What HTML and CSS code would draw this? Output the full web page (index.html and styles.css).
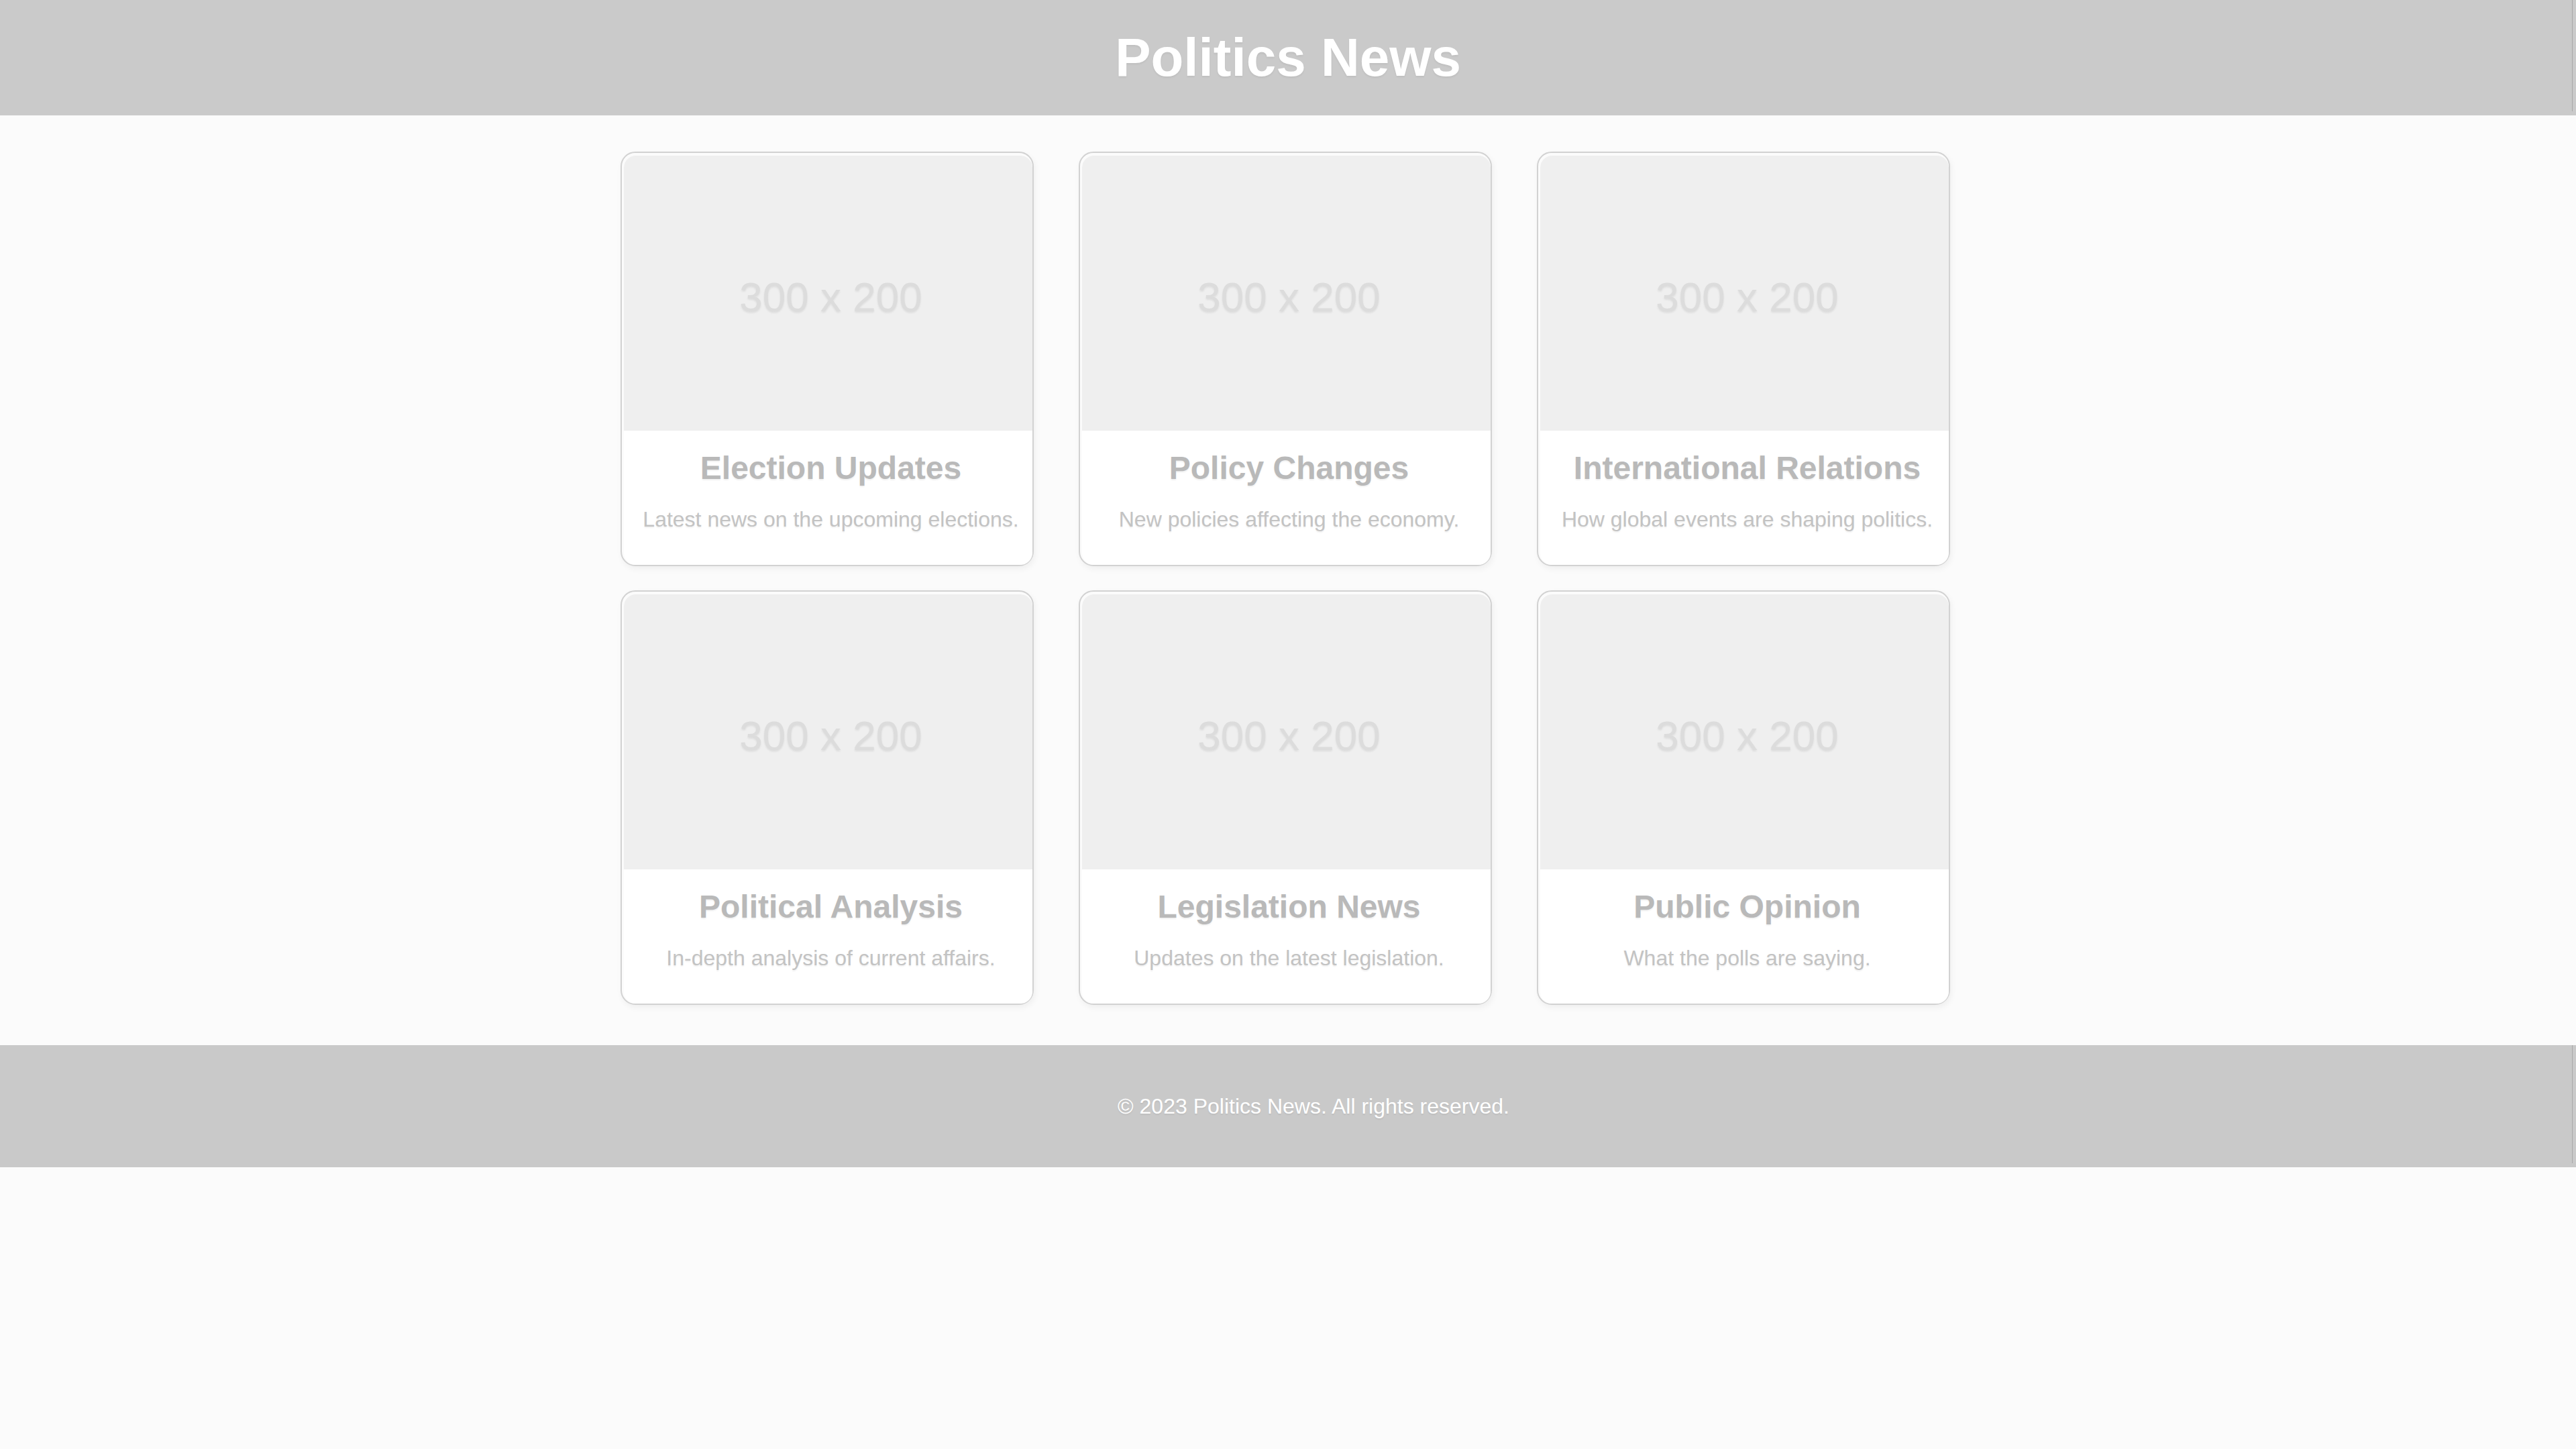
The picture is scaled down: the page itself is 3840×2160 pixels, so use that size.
FILE: index.html
```html
<!DOCTYPE html>
<html lang="en">
<head>
<meta charset="utf-8">
<title>Politics News</title>
<link rel="stylesheet" href="styles.css">
</head>
<body>
<header class="site-header">
  <h1 class="site-title">Politics News</h1>
</header>
<main class="content">
  <section class="grid">
    <article class="card">
      <div class="card-inner">
        <div class="thumb"><span>300 x 200</span></div>
        <div class="card-body">
          <h2 class="card-title">Election Updates</h2>
          <p class="card-text">Latest news on the upcoming elections.</p>
        </div>
      </div>
    </article>
    <article class="card">
      <div class="card-inner">
        <div class="thumb"><span>300 x 200</span></div>
        <div class="card-body">
          <h2 class="card-title">Policy Changes</h2>
          <p class="card-text">New policies affecting the economy.</p>
        </div>
      </div>
    </article>
    <article class="card">
      <div class="card-inner">
        <div class="thumb"><span>300 x 200</span></div>
        <div class="card-body">
          <h2 class="card-title">International Relations</h2>
          <p class="card-text">How global events are shaping politics.</p>
        </div>
      </div>
    </article>
    <article class="card">
      <div class="card-inner">
        <div class="thumb"><span>300 x 200</span></div>
        <div class="card-body">
          <h2 class="card-title">Political Analysis</h2>
          <p class="card-text">In-depth analysis of current affairs.</p>
        </div>
      </div>
    </article>
    <article class="card">
      <div class="card-inner">
        <div class="thumb"><span>300 x 200</span></div>
        <div class="card-body">
          <h2 class="card-title">Legislation News</h2>
          <p class="card-text">Updates on the latest legislation.</p>
        </div>
      </div>
    </article>
    <article class="card">
      <div class="card-inner">
        <div class="thumb"><span>300 x 200</span></div>
        <div class="card-body">
          <h2 class="card-title">Public Opinion</h2>
          <p class="card-text">What the polls are saying.</p>
        </div>
      </div>
    </article>
  </section>
</main>
<footer class="site-footer">
  <p class="footer-text">© 2023 Politics News. All rights reserved.</p>
</footer>
</body>
</html>
```

FILE: styles.css
```css
html, body {
  margin: 0;
  padding: 0;
}

body {
  background: #fbfbfb;
  font-family: "Liberation Sans", Arial, sans-serif;
  min-height: 2160px;
}

.site-header {
  position: relative;
  background: #cacaca;
  height: 172px;
  display: flex;
  align-items: center;
  justify-content: center;
}

.site-header::after,
.site-footer::after {
  content: "";
  position: absolute;
  right: 5px;
  top: 0;
  bottom: 6px;
  width: 1px;
  background: #a8a8a8;
}

.site-title {
  margin: 0;
  color: #ffffff;
  font-size: 80px;
  font-weight: 700;
  line-height: 92px;
  text-shadow: 0 2px 3px rgba(0, 0, 0, 0.06);
}

.content {
  padding: 54px 8px 60px 0;
}

.grid {
  display: grid;
  grid-template-columns: repeat(3, 616px);
  column-gap: 67px;
  row-gap: 36px;
  justify-content: center;
}

.card {
  border: 2px solid #d2d2d2;
  border-radius: 22px;
  padding: 4px 0 0 3px;
  background: #fbfbfb;
  box-shadow: 2px 4px 10px rgba(0, 0, 0, 0.05);
}

.card-inner {
  background: #ffffff;
  border-radius: 18px;
  overflow: hidden;
}

.thumb {
  height: 410px;
  box-sizing: border-box;
  padding-top: 10px;
  background: #efefef;
  display: flex;
  align-items: center;
  justify-content: center;
}

.thumb span {
  font-size: 62px;
  color: #dcdcdc;
  text-shadow: 0 2px 3px rgba(0, 0, 0, 0.08);
  margin-left: 8px;
}

.card-body {
  padding: 28px 10px 49px 18px;
  text-align: center;
}

.card-title {
  margin: 0 0 31px;
  font-size: 48px;
  line-height: 55px;
  font-weight: 700;
  color: #b9b9b9;
  text-shadow: 0 2px 2px rgba(0, 0, 0, 0.06);
}

.card-text {
  margin: 0;
  font-size: 32px;
  line-height: 37px;
  color: #c3c3c3;
  text-shadow: 0 2px 2px rgba(0, 0, 0, 0.06);
}

.site-footer {
  position: relative;
  background: #c9c9c9;
  height: 182px;
  display: flex;
  align-items: center;
  justify-content: center;
}

.footer-text {
  margin: 0;
  padding-left: 76px;
  font-size: 32px;
  line-height: 37px;
  color: #ffffff;
  text-shadow: 0 2px 2px rgba(0, 0, 0, 0.06);
}
```
